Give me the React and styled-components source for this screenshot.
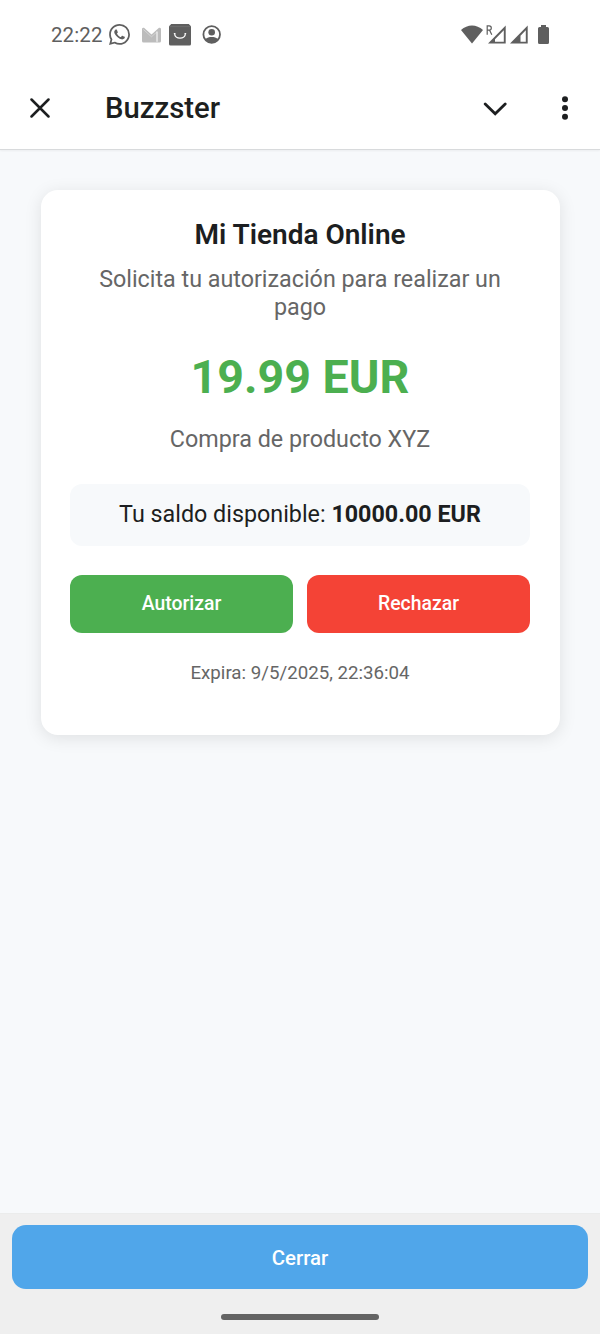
import React from 'react';
import styled, { createGlobalStyle } from 'styled-components';

const GlobalStyle = createGlobalStyle`
  * {
    box-sizing: border-box;
  }
  body {
    margin: 0;
    font-family: Roboto, sans-serif;
    color: #1c1e21;
  }
`;

/* layout */
const Screen = styled.div`
  display: flex;
  flex-direction: column;
  width: 600px;
  height: 1334px;
  background: #f7f9fb;
`;

// StatusBar
const StatusBarWrapper = styled.div`
  display: flex;
  align-items: center;
  height: 69px;
  padding: 0 51px;
  background: #fff;
  color: #5f5f5f;
`;
const Clock = styled.span`
  width: 58px;
  font-size: 20.5px;
  line-height: 24px;
  letter-spacing: .1px;
`;
const StatusIcon = styled.svg`
  display: block;
  flex: none;
  margin-left: ${({ $gap }) => $gap || 0}px;
`;
const Spacer = styled.div`
  flex: 1;
`;

// AppBar
const AppBar = styled.header`
  display: flex;
  align-items: center;
  height: 81px;
  padding: 0 24px 3px 24px;
  background: #fff;
  border-bottom: 1px solid #d8dadc;
  box-shadow: 0 1px 2px rgba(0, 0, 0, .05);
`;
const IconButton = styled.button`
  display: flex;
  align-items: center;
  justify-content: center;
  width: 32px;
  height: 32px;
  padding: 0;
  border: none;
  background: none;
  color: #1d1f20;
`;
const AppTitle = styled.h1`
  flex: 1;
  margin: 0 0 0 49px;
  font-size: 29.3px;
  font-weight: 500;
  line-height: 34px;
  color: #1d1f20;
`;
const MinimizeButton = styled(IconButton)`
  padding-top: 2px;
`;
const MenuButton = styled(IconButton)`
  margin: 0 -5px 0 38px;
`;

// PaymentCard
const Content = styled.main`
  flex: 1;
  padding: 40px 40.5px 0;
`;
const Card = styled.section`
  display: flex;
  flex-direction: column;
  height: 545px;
  padding: 29px 29.5px;
  border-radius: 17px;
  background: #fff;
  text-align: center;
  box-shadow: 0 3px 17px rgba(0, 0, 0, .1);
`;
const StoreName = styled.h2`
  margin: 0;
  font-size: 28px;
  font-weight: 600;
  line-height: 32px;
`;
const Description = styled.p`
  margin: ${({ $top }) => $top}px 0 0;
  padding: 0 12px;
  font-size: 23.3px;
  line-height: 27.5px;
  color: #666;
`;
const Amount = styled.div`
  margin-top: 29px;
  font-size: 46.6px;
  font-weight: 700;
  line-height: 54px;
  color: #4caf50;
`;
const Balance = styled.div`
  height: 62px;
  margin-top: 30px;
  border-radius: 12px;
  background: #f7f9fb;
  font-size: 23.3px;
  line-height: 60px;
`;
const Actions = styled.div`
  display: flex;
  gap: 14px;
  margin-top: 29px;
`;
const Button = styled.button`
  flex: 1;
  height: ${({ $large }) => ($large ? 64 : 58)}px;
  padding: ${({ $large }) => ($large ? '2px 0 0' : 0)};
  border: none;
  border-radius: ${({ $large }) => ($large ? 14 : 12)}px;
  background: ${({ $color }) => $color};
  color: #fff;
  font-family: inherit;
  font-size: ${({ $large }) => ($large ? 20.4 : 19.4)}px;
  font-weight: 500;
`;
const Expiration = styled.p`
  margin: 28px 0 0;
  font-size: 18.7px;
  line-height: 24px;
  color: #666;
`;

// BottomBar
const BottomBar = styled.footer`
  display: flex;
  flex-direction: column;
  align-items: center;
  height: 121px;
  padding: 11px 12px 0;
  background: #efefef;
  border-top: 1px solid #ebecec;
`;
const CloseRow = styled.div`
  display: flex;
  width: 100%;
`;
const HomeIndicator = styled.div`
  width: 158px;
  height: 6px;
  margin-top: 25px;
  border-radius: 3px;
  background: #636363;
`;

const StatusBar = () => (
  <StatusBarWrapper>
    <Clock>22:22</Clock>
    <StatusIcon width="21" height="21" viewBox="0 0 24 24" fill="currentColor">
      <path d="M17.472 14.382c-.297-.149-1.758-.867-2.03-.967-.273-.099-.471-.148-.67.15-.197.297-.767.966-.94 1.164-.173.199-.347.223-.644.075-.297-.15-1.255-.463-2.39-1.475-.883-.788-1.48-1.761-1.653-2.059-.173-.297-.018-.458.13-.606.134-.133.298-.347.446-.52.149-.174.198-.298.298-.497.099-.198.05-.371-.025-.52-.075-.149-.669-1.612-.916-2.207-.242-.579-.487-.5-.669-.51-.173-.008-.371-.01-.57-.01-.198 0-.52.074-.792.372-.272.297-1.04 1.016-1.04 2.479 0 1.462 1.065 2.875 1.213 3.074.149.198 2.096 3.2 5.077 4.487.709.306 1.262.489 1.694.625.712.227 1.36.195 1.871.118.571-.085 1.758-.719 2.006-1.413.248-.694.248-1.289.173-1.413-.074-.124-.272-.198-.57-.347m-5.421 7.403h-.004a9.87 9.87 0 01-5.031-1.378l-.361-.214-3.741.982.998-3.648-.235-.374a9.86 9.86 0 01-1.51-5.26c.001-5.45 4.436-9.884 9.888-9.884 2.64 0 5.122 1.03 6.988 2.898a9.825 9.825 0 012.893 6.994c-.003 5.45-4.437 9.884-9.885 9.884m8.413-18.297A11.815 11.815 0 0012.05 0C5.495 0 .16 5.335.157 11.892c0 2.096.547 4.142 1.588 5.945L.057 24l6.305-1.654a11.882 11.882 0 005.683 1.448h.005c6.554 0 11.89-5.335 11.893-11.893a11.821 11.821 0 00-3.48-8.413z" />
    </StatusIcon>
    <StatusIcon $gap={12} width="19" height="16" viewBox="0 0 19 16">
      <path d="M0 2.2Q0 .5 2 .8L9.5 7.6 17 .8Q19 .5 19 2.2V14Q19 15.5 17.5 15.5H1.5Q0 15.5 0 14Z" fill="#bcbcbc" />
      <path d="M1.3 2.4 9.5 9.8 14.8 5" fill="none" stroke="#fff" strokeOpacity=".5" strokeWidth=".7" />
      <path d="M15 4.5V14.8" stroke="#fff" strokeWidth="1" />
    </StatusIcon>
    <StatusIcon $gap={8} width="22" height="22" viewBox="0 0 22 22">
      <path d="M2.2 0h17.6L22 2.3V20a1.5 1.5 0 0 1-1.5 1.5H1.5A1.5 1.5 0 0 1 0 20V2.3Z" fill="#5f5f5f" />
      <path d="M1 2.6h20" stroke="#6e6e6e" />
      <path d="M5.6 9.2c0 6.6 10.8 6.6 10.8 0" fill="none" stroke="#fff" strokeWidth="1.3" />
      <path d="M4.8 9.6h1.6M15.6 9.6h1.6" stroke="#fff" />
    </StatusIcon>
    <StatusIcon $gap={11} width="20" height="19" viewBox="0 0 20 19">
      <circle cx="9.7" cy="9.5" r="8.3" fill="none" stroke="#5f5f5f" strokeWidth="1.8" />
      <circle cx="9.7" cy="7.2" r="3.3" fill="#5f5f5f" />
      <path d="M3.2 14.1C5 12.4 7.200 11.9 9.7 11.9s4.7.5 6.5 2.2C14.5 16.7 12.2 17.7 9.700 17.7S4.900 16.7 3.2 14.1Z" fill="#5f5f5f" />
    </StatusIcon>
    <Spacer />
    <StatusIcon width="22" height="19" viewBox="0 0 22 19">
      <path d="M11 18.5 0 5C6.5-1 15.5-1 22 5Z" fill="#5f5f5f" />
    </StatusIcon>
    <StatusIcon $gap={3} width="20" height="20" viewBox="0 0 20 20">
      <path d="M1.2 9.8V.9H3.2c2.8 0 2.8 4.3 0 4.3H1.2M3.6 5.2 5.8 9.8" fill="none" stroke="#5f5f5f" strokeWidth="1.2" />
      <path d="M2 18.6 19.7 .6V18.6ZM9 16.8h8.8V5.2L9 14.3Z" fill="#5f5f5f" fillRule="evenodd" />
    </StatusIcon>
    <StatusIcon $gap={4} width="18" height="20" viewBox="0 0 18 20">
      <path d="M0 18.6 17.7 .6V18.6ZM10.5 16.8h5.3V5.2L10.5 10.8Z" fill="#5f5f5f" fillRule="evenodd" />
    </StatusIcon>
    <StatusIcon $gap={10} width="11" height="19" viewBox="0 0 11 19">
      <path d="M3 0h5v2h1.5Q11 2 11 3.5V17.5Q11 19 9.5 19h-8Q0 19 0 17.5v-14Q0 2 1.5 2H3Z" fill="#5f5f5f" />
    </StatusIcon>
  </StatusBarWrapper>
);

const Header = () => (
  <AppBar>
    <IconButton aria-label="Cerrar">
      <svg width="20" height="20" viewBox="0 0 20 20" fill="none" stroke="currentColor" strokeWidth="2.5" strokeLinecap="round">
        <path d="m1.5 1.5 17 17M18.5 1.5l-17 17" />
      </svg>
    </IconButton>
    <AppTitle>Buzzster</AppTitle>
    <MinimizeButton aria-label="Minimizar">
      <svg width="24" height="14" viewBox="0 0 24 14" fill="none" stroke="currentColor" strokeWidth="2.8" strokeLinecap="round">
        <path d="M2.2 2 12.2 11.8 22.2 2" />
      </svg>
    </MinimizeButton>
    <MenuButton aria-label="Menú">
      <svg width="6" height="24" viewBox="0 0 6 24" fill="currentColor">
        <circle cx="3" cy="3.2" r="3" />
        <circle cx="3" cy="12" r="3" />
        <circle cx="3" cy="20.8" r="3" />
      </svg>
    </MenuButton>
  </AppBar>
);

const PaymentCard = ({ store, amount, concept, balance, expires }) => (
  <Card>
    <StoreName>{store}</StoreName>
    <Description $top={15}>Solicita tu autorización para realizar un pago</Description>
    <Amount>{amount}</Amount>
    <Description $top={22}>{concept}</Description>
    <Balance>
      Tu saldo disponible: <strong>{balance}</strong>
    </Balance>
    <Actions>
      <Button $color="#4caf50">Autorizar</Button>
      <Button $color="#f44336">Rechazar</Button>
    </Actions>
    <Expiration>Expira: {expires}</Expiration>
  </Card>
);

const App = () => (
  <Screen>
    <GlobalStyle />
    <StatusBar />
    <Header />
    <Content>
      <PaymentCard
        store="Mi Tienda Online"
        amount="19.99 EUR"
        concept="Compra de producto XYZ"
        balance="10000.00 EUR"
        expires="9/5/2025, 22:36:04"
      />
    </Content>
    <BottomBar>
      <CloseRow>
        <Button $large $color="#50a6ea">Cerrar</Button>
      </CloseRow>
      <HomeIndicator />
    </BottomBar>
  </Screen>
);

export default App;
